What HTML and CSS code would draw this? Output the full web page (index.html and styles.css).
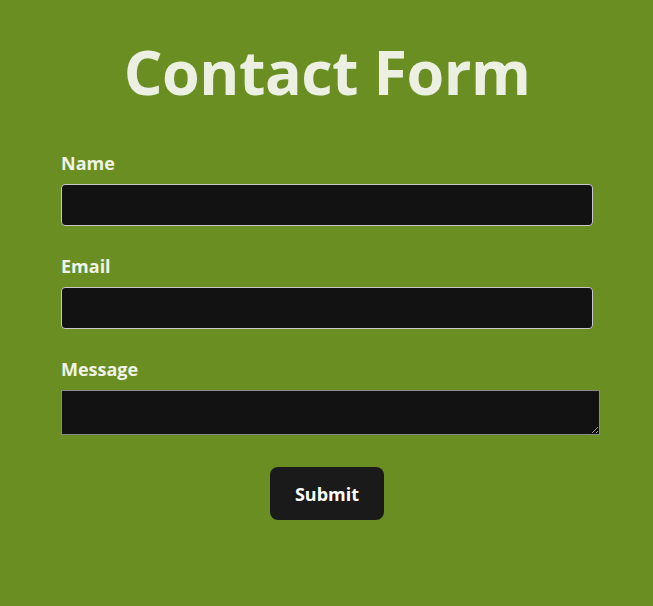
FILE: index.html
```html
<!DOCTYPE html>
<html>
<head>
<meta charset="utf-8">
<link rel="stylesheet" href="styles.css">
</head>
<body>
<main class="page">
  <h1 class="title">Contact Form</h1>
  <form class="form">
    <div class="field">
      <label class="label" for="name">Name</label>
      <input class="input" id="name" type="text">
    </div>
    <div class="field">
      <label class="label" for="email">Email</label>
      <input class="input" id="email" type="email">
    </div>
    <div class="field">
      <label class="label" for="message">Message</label>
      <textarea class="textarea" id="message"></textarea>
    </div>
    <div class="actions">
      <button class="button" type="button">Submit</button>
    </div>
  </form>
</main>
</body>
</html>
```
FILE: styles.css
```css
html, body {
  margin: 0;
  padding: 0;
  background: #6b8e23;
  height: 100%;
}
body {
  font-family: "Open Sans", "Noto Sans", sans-serif;
  color: #eaf0e0;
}
.page {
  padding: 24px 0 0 61px;
  width: 540px;
}
.title {
  margin: 0;
  font-size: 61px;
  line-height: 96px;
  font-weight: 700;
  text-align: center;
  color: #ecf0e2;
  letter-spacing: -0.5px;
  width: 532px;
}
.form {
  margin-top: 31px;
  display: flex;
  flex-direction: column;
}
.field {
  display: flex;
  flex-direction: column;
  margin-bottom: 28px;
}
.label {
  font-size: 18px;
  line-height: 24px;
  font-weight: 700;
  margin-bottom: 9px;
  color: #eef3e6;
}
.input {
  box-sizing: border-box;
  width: 532px;
  height: 42px;
  background: #121212;
  border: 1px solid #c8c8c8;
  border-radius: 4px;
  color: #fff;
  padding: 0 8px;
  font-size: 16px;
}
.textarea {
  box-sizing: border-box;
  width: 539px;
  height: 45px;
  background: #121212;
  border: 1px solid #8a8a8a;
  border-radius: 0;
  color: #fff;
  margin: 0;
  display: block;
}
.actions {
  display: flex;
  justify-content: center;
  width: 532px;
  margin-top: 4px;
}
.button {
  width: 114px;
  height: 53px;
  background: #1a1a1a;
  color: #fff;
  border: none;
  border-radius: 8px;
  font-family: "Open Sans", "Noto Sans", sans-serif;
  font-weight: 700;
  font-size: 18px;
}
```
